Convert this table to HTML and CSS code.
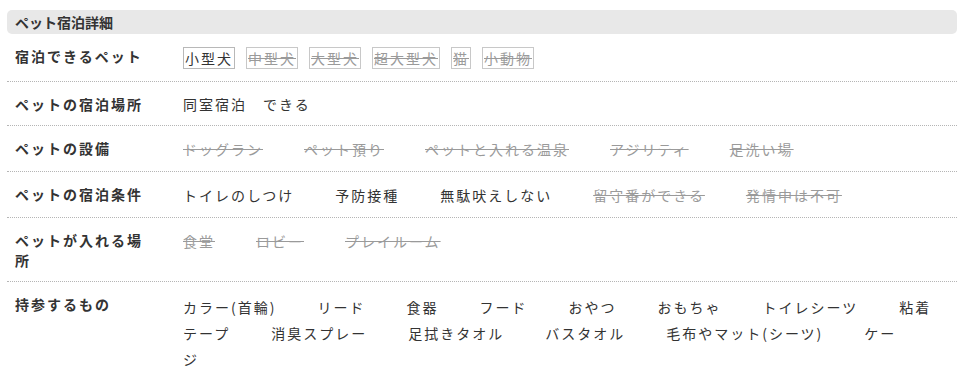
FILE: index.html
```html
<!DOCTYPE html>
<html lang="ja">
<head>
<meta charset="utf-8">
<title>ペット宿泊詳細</title>
<link rel="stylesheet" href="styles.css">
</head>
<body>
<section class="detail">
  <h2 class="detail-head">ペット宿泊詳細</h2>
  <div class="row">
    <div class="label">宿泊できるペット</div>
    <div class="tags"><span class="tag">小型犬</span><span class="tag off">中型犬</span><span class="tag off">大型犬</span><span class="tag off">超大型犬</span><span class="tag off">猫</span><span class="tag off">小動物</span></div>
  </div>
  <div class="row">
    <div class="label">ペットの宿泊場所</div>
    <div class="val">同室宿泊　できる</div>
  </div>
  <div class="row">
    <div class="label">ペットの設備</div>
    <div class="items"><span class="item off">ドッグラン</span><span class="item off">ペット預り</span><span class="item off">ペットと入れる温泉</span><span class="item off">アジリティ</span><span class="item off">足洗い場</span></div>
  </div>
  <div class="row">
    <div class="label">ペットの宿泊条件</div>
    <div class="items"><span class="item">トイレのしつけ</span><span class="item">予防接種</span><span class="item">無駄吠えしない</span><span class="item off">留守番ができる</span><span class="item off">発情中は不可</span></div>
  </div>
  <div class="row">
    <div class="label">ペットが入れる場所</div>
    <div class="items"><span class="item off">食堂</span><span class="item off">ロビー</span><span class="item off">プレイルーム</span></div>
  </div>
  <div class="row">
    <div class="label">持参するもの</div>
    <div class="items multi"><span class="item">カラー(首輪)</span><span class="item">リード</span><span class="item">食器</span><span class="item">フード</span><span class="item">おやつ</span><span class="item">おもちゃ</span><span class="item">トイレシーツ</span><span class="item">粘着テープ</span><span class="item">消臭スプレー</span><span class="item">足拭きタオル</span><span class="item">バスタオル</span><span class="item">毛布やマット(シーツ)</span><span class="item">ケージ</span></div>
  </div>
</section>
</body>
</html>
```

FILE: styles.css
```css
html, body {
  margin: 0;
  padding: 0;
  background: #ffffff;
}

body {
  font-family: "Noto Sans CJK JP", "Noto Sans", sans-serif;
  color: #333333;
  font-size: 14px;
}

.detail {
  padding: 10px 17px 0 7px;
}

.detail-head {
  margin: 0;
  height: 24px;
  line-height: 24px;
  padding: 0 8px;
  background: #e8e8e8;
  border-radius: 5px;
  font-size: 14px;
  font-weight: 700;
  color: #333333;
}

.row {
  display: grid;
  grid-template-columns: 168px 1fr;
  padding: 12px 17px 10px 8px;
  border-bottom: 1px dotted #b5b5b5;
}

.row:last-child {
  border-bottom: none;
}

.label {
  padding-right: 30px;
  font-weight: 700;
  line-height: 20.5px;
  letter-spacing: 2px;
  color: #333333;
}

.val {
  line-height: 20px;
  letter-spacing: 2px;
}

.tags {
  display: flex;
  align-items: flex-start;
  gap: 11px;
  padding: 1px 0 2px;
}

.tag {
  display: block;
  line-height: 20px;
  padding: 0 1px;
  border: 1px solid #b8b8b8;
  letter-spacing: 2px;
  color: #333333;
}

.tag.off {
  border-color: #c8c8c8;
  color: #9a9a9a;
  text-decoration: line-through;
}

.items {
  line-height: 24px;
  margin-top: -1px;
  letter-spacing: 2px;
}

.items.multi {
  line-height: 26px;
  margin-top: 0;
}

.item {
  margin-right: 41px;
}

.item.off {
  color: #9a9a9a;
  text-decoration: line-through;
}
```
